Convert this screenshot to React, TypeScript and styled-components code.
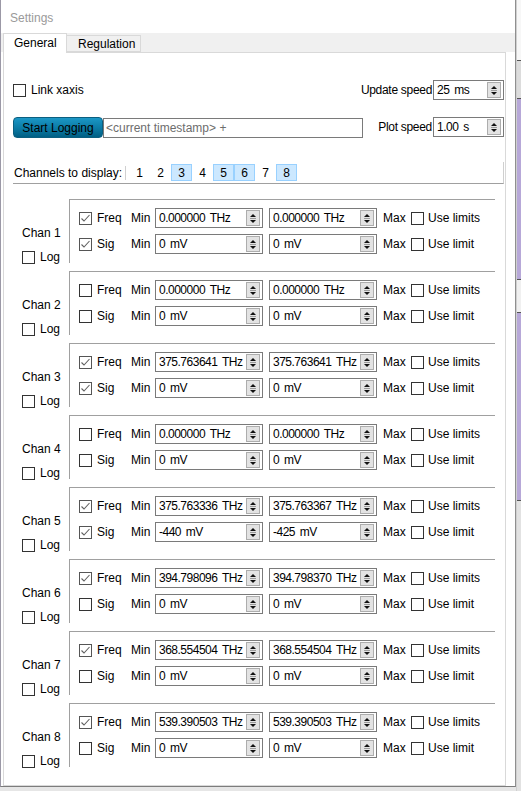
import React from "react";
import styled, { createGlobalStyle } from "styled-components";

const Global = createGlobalStyle`
  html, body { margin: 0; padding: 0; }
  body {
    font-family: "Liberation Sans", Arial, sans-serif;
    font-size: 12px;
    color: #000;
    background: #e6e6e6;
    overflow: hidden;
  }
`;

const Screen = styled.div`
  display: flex;
  width: 521px;
  height: 791px;
  overflow: hidden;
`;

const Win = styled.div`
  width: 516px;
  height: 787px;
  flex: none;
  box-sizing: border-box;
  background: #fff;
  border-left: 1px solid #9b98a6;
  border-right: 1px solid #8f8f8f;
  border-bottom: 1px solid #7c7c7c;
  overflow: hidden;
  display: flex;
  flex-direction: column;
`;

const TitleBar = styled.div`
  height: 33px;
  flex: none;
  display: flex;
  align-items: center;
  padding: 2px 0 0 9px;
  box-sizing: border-box;
  color: #9a9a9a;
  font-size: 12px;
`;

const TabStrip = styled.div`
  height: 19px;
  flex: none;
  background: #f0f0f0;
  display: flex;
  align-items: flex-end;
  padding-left: 2px;
`;

const Tab = styled.div<{ $active?: boolean }>`
  box-sizing: border-box;
  height: ${(p) => (p.$active ? "20px" : "17px")};
  margin-bottom: ${(p) => (p.$active ? "-1px" : "0")};
  position: relative;
  z-index: ${(p) => (p.$active ? 2 : 1)};
  background: ${(p) => (p.$active ? "#fff" : "#f0f0f0")};
  border: 1px solid #d9d9d9;
  border-bottom: ${(p) => (p.$active ? "none" : "1px solid #d9d9d9")};
  border-left: ${(p) => (p.$active ? "1px solid #d9d9d9" : "none")};
  width: ${(p) => (p.$active ? "64px" : "74px")};
  padding-left: ${(p) => (p.$active ? "10px" : "11px")};
  display: flex;
  align-items: center;
  padding-bottom: ${(p) => (p.$active ? "2px" : "0")};
`;

const Panel = styled.div`
  margin-left: 2px;
  width: 503px;
  box-sizing: border-box;
  border: 1px solid #d9d9d9;
  flex: 1;
  padding: 27px 1px 0 9px;
  display: flex;
  flex-direction: column;
`;

const TopRow = styled.div<{ $mt?: number }>`
  display: flex;
  align-items: center;
  height: 20px;
  margin-top: ${(p) => p.$mt ?? 0}px;
`;

const Spacer = styled.div`
  flex: 1;
`;

const RightLabel = styled.span`
  margin-right: 1px;
  white-space: nowrap;
  letter-spacing: -0.3px;
`;

const CheckLabel = styled.label<{ $gap?: number }>`
  display: flex;
  align-items: center;
  gap: ${(p) => p.$gap ?? 5}px;
  white-space: nowrap;
`;

const Box = styled.span<{ $checked?: boolean }>`
  width: 13px;
  height: 13px;
  box-sizing: border-box;
  border: 1px solid ${(p) => (p.$checked ? "#555" : "#333")};
  background: #fff;
  display: inline-flex;
  flex: none;
`;

const Check: React.FC<{ checked?: boolean }> = ({ checked }) => (
  <Box $checked={checked}>
    {checked && (
      <svg width="11" height="11" viewBox="0 0 11 11">
        <path d="M1.5 5.5 L4 8 L9.5 2" fill="none" stroke="#606060" strokeWidth="1.1" />
      </svg>
    )}
  </Box>
);

const SpinWrap = styled.div<{ $w: number }>`
  width: ${(p) => p.$w}px;
  height: 20px;
  box-sizing: border-box;
  border: 1px solid #7a7a7a;
  background: #fff;
  display: flex;
  align-items: center;
  padding: 0 2px 0 3px;
  flex: none;
`;

const SpinText = styled.span`
  flex: 1;
  white-space: nowrap;
  overflow: hidden;
  letter-spacing: -0.5px;
  word-spacing: 2px;
`;

const SpinBtn = styled.span`
  width: 14px;
  height: 16px;
  box-sizing: border-box;
  border: 1px solid #adadad;
  background: #e3e3e3;
  display: flex;
  align-items: center;
  justify-content: center;
  flex: none;
`;

const Spin: React.FC<{ value: string; w: number }> = ({ value, w }) => (
  <SpinWrap $w={w}>
    <SpinText>{value}</SpinText>
    <SpinBtn>
      <svg width="8" height="12" viewBox="0 0 8 12">
        <path d="M4 2 L7 5 L1 5 Z" fill="#111" />
        <rect x="1" y="6" width="6" height="0.8" fill="#888" />
        <path d="M1 8 L7 8 L4 11 Z" fill="#111" />
      </svg>
    </SpinBtn>
  </SpinWrap>
);

const StartBtn = styled.button`
  width: 90px;
  height: 21px;
  flex: none;
  border: 1px solid #0b5f80;
  border-radius: 4px;
  background: linear-gradient(#1b97c6, #0b7aa4 55%, #005f84);
  color: #000;
  font-family: "Liberation Sans", Arial, sans-serif;
  font-size: 12px;
  padding: 0;
  margin-top: 1px;
`;

const LogInput = styled.div`
  width: 260px;
  height: 20px;
  box-sizing: border-box;
  border: 1px solid #7a7a7a;
  color: #6d6d6d;
  display: flex;
  align-items: center;
  padding-left: 2px;
  margin-top: 1px;
`;

const ChanStrip = styled.div`
  margin-top: 25px;
  height: 22px;
  box-sizing: border-box;
  border-right: 1px solid #cfcfcf;
  border-bottom: 1px solid #a0a0a0;
  display: flex;
  align-items: center;
  padding-left: 1px;
`;

const Sep = styled.span`
  width: 1px;
  height: 14px;
  background: #d0d0d0;
  margin: 0 3px 0 3px;
`;

const Cell = styled.span<{ $on?: boolean }>`
  width: 21px;
  height: 17px;
  box-sizing: border-box;
  display: flex;
  align-items: center;
  justify-content: center;
  background: ${(p) => (p.$on ? "#cce8ff" : "transparent")};
  border: 1px solid ${(p) => (p.$on ? "#99d1ff" : "transparent")};
  padding-top: 1px;
`;

const ChanList = styled.div`
  margin-top: 15px;
  display: flex;
  flex-direction: column;
  gap: 8px;
`;

const ChanBlock = styled.div`
  display: flex;
  height: 64px;
`;

const ChanSide = styled.div`
  width: 56px;
  box-sizing: border-box;
  padding: 27px 0 0 9px;
  display: flex;
  flex-direction: column;
  gap: 10px;
`;

const ChanName = styled.span`
  line-height: 14px;
  white-space: nowrap;
`;

const Frame = styled.div`
  width: 426px;
  box-sizing: border-box;
  border-top: 1px solid #a0a0a0;
  border-left: 1px solid #a0a0a0;
  padding: 8px 0 0 9px;
  display: flex;
  flex-direction: column;
  gap: 6px;
`;

const LimRow = styled.div`
  display: flex;
  align-items: center;
  height: 20px;
`;

const Cap = styled.span<{ $w: number }>`
  width: ${(p) => p.$w}px;
  flex: none;
  white-space: nowrap;
`;

const Gap = styled.span<{ $w: number }>`
  width: ${(p) => p.$w}px;
  flex: none;
`;

const Strip = styled.div`
  flex: 1;
  display: flex;
  flex-direction: column;
  border-left: 1px solid #d0d0d0;
`;

const StripPart = styled.div<{ $h: number; $c: string }>`
  height: ${(p) => p.$h}px;
  background: ${(p) => p.$c};
  border-bottom: 1px solid #555;
  flex: none;
`;

type Chan = {
  f: boolean;
  s: boolean;
  f1: string;
  f2: string;
  s1: string;
  s2: string;
};

const Z = "0.000000 THz";
const chans: Chan[] = [
  { f: true, s: true, f1: Z, f2: Z, s1: "0 mV", s2: "0 mV" },
  { f: false, s: false, f1: Z, f2: Z, s1: "0 mV", s2: "0 mV" },
  { f: true, s: true, f1: "375.763641 THz", f2: "375.763641 THz", s1: "0 mV", s2: "0 mV" },
  { f: false, s: false, f1: Z, f2: Z, s1: "0 mV", s2: "0 mV" },
  { f: true, s: true, f1: "375.763336 THz", f2: "375.763367 THz", s1: "-440 mV", s2: "-425 mV" },
  { f: true, s: false, f1: "394.798096 THz", f2: "394.798370 THz", s1: "0 mV", s2: "0 mV" },
  { f: true, s: false, f1: "368.554504 THz", f2: "368.554504 THz", s1: "0 mV", s2: "0 mV" },
  { f: true, s: false, f1: "539.390503 THz", f2: "539.390503 THz", s1: "0 mV", s2: "0 mV" },
];

const shown = [false, false, true, false, true, true, false, true];

const Limits: React.FC<{ on: boolean; name: string; a: string; b: string; use: string }> = ({
  on,
  name,
  a,
  b,
  use,
}) => (
  <LimRow>
    <Check checked={on} />
    <Gap $w={5} />
    <Cap $w={34}>{name}</Cap>
    <Cap $w={24}>Min</Cap>
    <Spin value={a} w={108} />
    <Gap $w={6} />
    <Spin value={b} w={108} />
    <Gap $w={6} />
    <Cap $w={28}>Max</Cap>
    <CheckLabel $gap={4}>
      <Check />
      <span>{use}</span>
    </CheckLabel>
  </LimRow>
);

export default function App() {
  return (
    <Screen>
      <Global />
      <Win>
        <TitleBar>Settings</TitleBar>
        <TabStrip>
          <Tab $active>General</Tab>
          <Tab>Regulation</Tab>
        </TabStrip>
        <Panel>
          <TopRow>
            <CheckLabel>
              <Check />
              <span>Link xaxis</span>
            </CheckLabel>
            <Spacer />
            <RightLabel>Update speed</RightLabel>
            <Spin value="25 ms" w={71} />
          </TopRow>
          <TopRow $mt={17}>
            <StartBtn>Start Logging</StartBtn>
            <LogInput>&lt;current timestamp&gt; +</LogInput>
            <Spacer />
            <RightLabel>Plot speed</RightLabel>
            <Spin value="1.00 s" w={71} />
          </TopRow>
          <ChanStrip>
            <span>Channels to display:</span>
            <Sep />
            {shown.map((on, i) => (
              <Cell key={i} $on={on}>
                {i + 1}
              </Cell>
            ))}
          </ChanStrip>
          <ChanList>
            {chans.map((c, i) => (
              <ChanBlock key={i}>
                <ChanSide>
                  <ChanName>Chan {i + 1}</ChanName>
                  <CheckLabel>
                    <Check />
                    <span>Log</span>
                  </CheckLabel>
                </ChanSide>
                <Frame>
                  <Limits on={c.f} name="Freq" a={c.f1} b={c.f2} use="Use limits" />
                  <Limits on={c.s} name="Sig" a={c.s1} b={c.s2} use="Use limit" />
                </Frame>
              </ChanBlock>
            ))}
          </ChanList>
        </Panel>
      </Win>
      <Strip>
        <StripPart $h={60} $c="#f7f7f7" />
        <StripPart $h={37} $c="#dcdcdc" />
        <StripPart $h={180} $c="#b7a8d8" />
        <StripPart $h={32} $c="#f0f0f0" />
        <StripPart $h={187} $c="#b7a8d8" />
        <StripPart $h={295} $c="#e2e2e2" />
      </Strip>
    </Screen>
  );
}
